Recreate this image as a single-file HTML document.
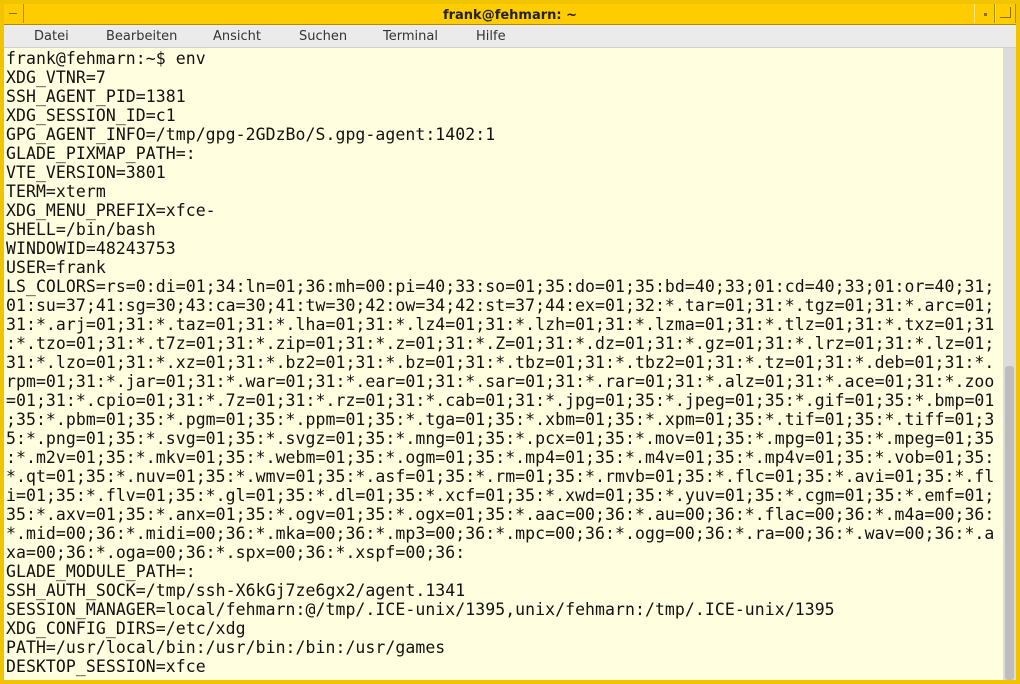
<!DOCTYPE html>
<html><head><meta charset="utf-8"><style>
html,body{margin:0;padding:0;width:1020px;height:684px;overflow:hidden;background:#e8b800;}
#win{position:absolute;left:0;top:0;width:1020px;height:684px;background:#f0c400;}
#title{position:absolute;left:4px;top:4px;width:1012px;height:20px;background:#ffcc00;border-bottom:1px solid #b08a00;}
#title .t{position:absolute;left:0;right:0;top:4px;text-align:center;font:bold 13px "DejaVu Sans","Liberation Sans",sans-serif;color:#222;}
.btn{position:absolute;top:0;width:19px;height:19px;border-right:1px solid #b08a00;border-left:1px solid #ffe680;}
#menu{position:absolute;left:4px;top:25px;width:1012px;height:22px;background:#ebebeb;border-bottom:1px solid #d0d0d0;font:13px "DejaVu Sans","Liberation Sans",sans-serif;color:#333;}
#menu span{position:absolute;top:4px;}
#term{position:absolute;left:4px;top:48px;width:999px;height:632px;background:#ffffe0;}
#sb{position:absolute;left:1003px;top:48px;width:13px;height:632px;background:#dcdcdc;}
#thumb{position:absolute;left:2px;top:318px;width:9px;height:314px;background:#bdbdbd;border-radius:3px;}
pre{margin:0;position:absolute;left:2px;top:1px;font:16.5px/19px "DejaVu Sans Mono","Liberation Mono",monospace;color:#111;letter-spacing:0.05px;}
</style></head><body><div id="win">
<div id="title"><div class="btn" style="left:0;border-left:none"><div style="position:absolute;left:5px;top:9px;width:8px;height:1px;background:#8a6d00"></div></div>
<div class="t">frank@fehmarn: ~</div>
<div class="btn" style="left:970px"><div style="position:absolute;left:9px;top:9px;width:3px;height:3px;background:#8a6d00"></div></div>
<div class="btn" style="left:991px"><div style="position:absolute;left:4px;top:3px;width:10px;height:10px;border-right:1px solid #8a6d00;border-bottom:1px solid #8a6d00"></div></div>
</div>
<div id="menu"><span style="left:30px">Datei</span><span style="left:102px">Bearbeiten</span><span style="left:209px">Ansicht</span><span style="left:295px">Suchen</span><span style="left:379px">Terminal</span><span style="left:472px">Hilfe</span></div>
<div id="term"><pre>frank@fehmarn:~$ env
XDG_VTNR=7
SSH_AGENT_PID=1381
XDG_SESSION_ID=c1
GPG_AGENT_INFO=/tmp/gpg-2GDzBo/S.gpg-agent:1402:1
GLADE_PIXMAP_PATH=:
VTE_VERSION=3801
TERM=xterm
XDG_MENU_PREFIX=xfce-
SHELL=/bin/bash
WINDOWID=48243753
USER=frank
LS_COLORS=rs=0:di=01;34:ln=01;36:mh=00:pi=40;33:so=01;35:do=01;35:bd=40;33;01:cd=40;33;01:or=40;31;
01:su=37;41:sg=30;43:ca=30;41:tw=30;42:ow=34;42:st=37;44:ex=01;32:*.tar=01;31:*.tgz=01;31:*.arc=01;
31:*.arj=01;31:*.taz=01;31:*.lha=01;31:*.lz4=01;31:*.lzh=01;31:*.lzma=01;31:*.tlz=01;31:*.txz=01;31
:*.tzo=01;31:*.t7z=01;31:*.zip=01;31:*.z=01;31:*.Z=01;31:*.dz=01;31:*.gz=01;31:*.lrz=01;31:*.lz=01;
31:*.lzo=01;31:*.xz=01;31:*.bz2=01;31:*.bz=01;31:*.tbz=01;31:*.tbz2=01;31:*.tz=01;31:*.deb=01;31:*.
rpm=01;31:*.jar=01;31:*.war=01;31:*.ear=01;31:*.sar=01;31:*.rar=01;31:*.alz=01;31:*.ace=01;31:*.zoo
=01;31:*.cpio=01;31:*.7z=01;31:*.rz=01;31:*.cab=01;31:*.jpg=01;35:*.jpeg=01;35:*.gif=01;35:*.bmp=01
;35:*.pbm=01;35:*.pgm=01;35:*.ppm=01;35:*.tga=01;35:*.xbm=01;35:*.xpm=01;35:*.tif=01;35:*.tiff=01;3
5:*.png=01;35:*.svg=01;35:*.svgz=01;35:*.mng=01;35:*.pcx=01;35:*.mov=01;35:*.mpg=01;35:*.mpeg=01;35
:*.m2v=01;35:*.mkv=01;35:*.webm=01;35:*.ogm=01;35:*.mp4=01;35:*.m4v=01;35:*.mp4v=01;35:*.vob=01;35:
*.qt=01;35:*.nuv=01;35:*.wmv=01;35:*.asf=01;35:*.rm=01;35:*.rmvb=01;35:*.flc=01;35:*.avi=01;35:*.fl
i=01;35:*.flv=01;35:*.gl=01;35:*.dl=01;35:*.xcf=01;35:*.xwd=01;35:*.yuv=01;35:*.cgm=01;35:*.emf=01;
35:*.axv=01;35:*.anx=01;35:*.ogv=01;35:*.ogx=01;35:*.aac=00;36:*.au=00;36:*.flac=00;36:*.m4a=00;36:
*.mid=00;36:*.midi=00;36:*.mka=00;36:*.mp3=00;36:*.mpc=00;36:*.ogg=00;36:*.ra=00;36:*.wav=00;36:*.a
xa=00;36:*.oga=00;36:*.spx=00;36:*.xspf=00;36:
GLADE_MODULE_PATH=:
SSH_AUTH_SOCK=/tmp/ssh-X6kGj7ze6gx2/agent.1341
SESSION_MANAGER=local/fehmarn:@/tmp/.ICE-unix/1395,unix/fehmarn:/tmp/.ICE-unix/1395
XDG_CONFIG_DIRS=/etc/xdg
PATH=/usr/local/bin:/usr/bin:/bin:/usr/games
DESKTOP_SESSION=xfce</pre></div>
<div id="sb"><div id="thumb"></div></div>
</div></body></html>
